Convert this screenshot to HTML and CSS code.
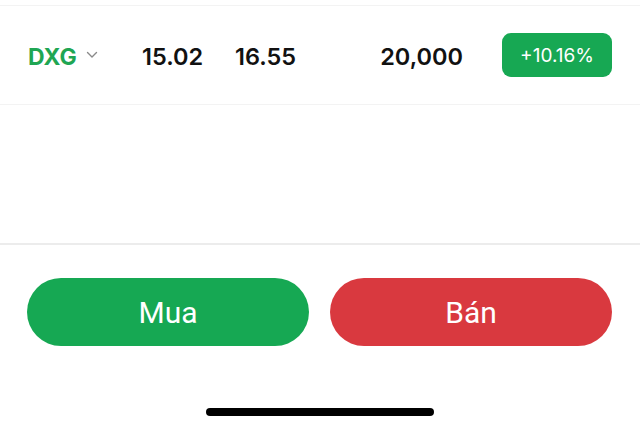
FILE: index.html
```html
<!DOCTYPE html>
<html lang="vi">
<head>
<meta charset="utf-8">
<link rel="stylesheet" href="styles.css">
</head>
<body>
<div class="screen">
  <div class="top-gap"></div>
  <div class="quote-row">
    <div class="sym">
      <span class="sym-name">DXG</span>
      <svg class="chev" width="12" height="8" viewBox="0 0 12 8"><path d="M1.5 1.5 L6 6 L10.5 1.5" fill="none" stroke="#8a8a8a" stroke-width="1.4" stroke-linecap="round" stroke-linejoin="round"/></svg>
    </div>
    <div class="num bid">15.02</div>
    <div class="num ask">16.55</div>
    <div class="num vol">20,000</div>
    <div class="badge">+10.16%</div>
  </div>
  <div class="blank"></div>
  <div class="actions">
    <button class="btn buy">Mua</button>
    <button class="btn sell">Bán</button>
  </div>
  <div class="home-area"><div class="home-bar"></div></div>
</div>
</body>
</html>
```
FILE: styles.css
```css
html, body {
  margin: 0;
  padding: 0;
  background: #ffffff;
}
.screen {
  width: 640px;
  height: 431px;
  display: flex;
  flex-direction: column;
  font-family: Inter, "Noto Sans", sans-serif;
  overflow: hidden;
}
.top-gap {
  height: 5px;
  border-bottom: 1px solid #f3f3f3;
}
.quote-row {
  box-sizing: border-box;
  height: 99px;
  display: flex;
  align-items: center;
  padding: 3px 28px 0 28px;
  border-bottom: 1px solid #f3f3f3;
}
.sym {
  width: 114px;
  display: flex;
  align-items: center;
  gap: 9px;
}
.sym-name {
  color: #1fa653;
  font-weight: 700;
  font-size: 23px;
  letter-spacing: 0.2px;
}
.chev {
  margin-top: -3px;
}
.num {
  font-size: 23.5px;
  font-weight: 600;
  color: #111111;
}
.bid {
  width: 93px;
}
.ask {
  width: 64px;
}
.vol {
  flex: 1;
  text-align: right;
}
.badge {
  margin-left: 39px;
  margin-top: -3px;
  width: 110px;
  height: 44px;
  border-radius: 9px;
  background: #17a853;
  color: #ffffff;
  font-size: 19px;
  font-weight: 400;
  display: flex;
  align-items: center;
  justify-content: center;
}
.blank {
  height: 138px;
  border-bottom: 2px solid #ececec;
}
.actions {
  display: flex;
  gap: 21px;
  padding: 33px 28px 0 27px;
}
.btn {
  flex: 1;
  height: 68px;
  border: none;
  border-radius: 34px;
  color: #ffffff;
  font-family: Roboto, Inter, sans-serif;
  font-size: 30px;
  font-weight: 400;
  padding: 0;
}
.buy {
  background: #16a853;
}
.sell {
  background: #d9393f;
}
.home-area {
  display: flex;
  justify-content: center;
  padding-top: 62px;
}
.home-bar {
  width: 228px;
  height: 8px;
  border-radius: 4px;
  background: #000000;
}
```
